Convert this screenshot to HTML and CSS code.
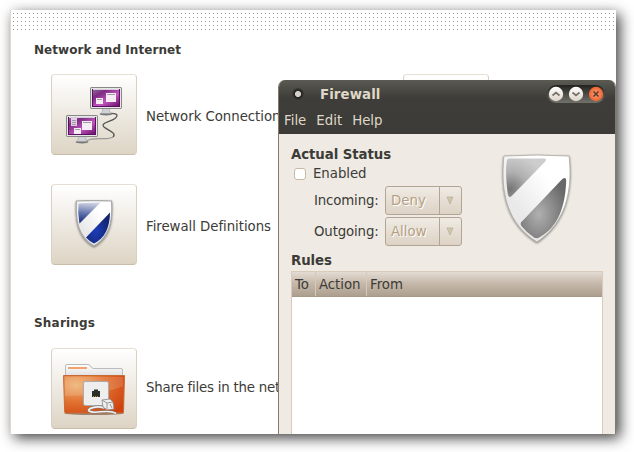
FILE: index.html
```html
<!DOCTYPE html>
<html lang="en">
<head>
<meta charset="utf-8">
<title>Firewall</title>
<link rel="stylesheet" href="styles.css">
</head>
<body>
<svg width="0" height="0" class="defs" aria-hidden="true">
  <defs>
    <linearGradient id="screen" x1="0" y1="0" x2="1" y2="1"><stop offset="0" stop-color="#8a6d92"/><stop offset=".25" stop-color="#7d2b83"/><stop offset=".6" stop-color="#c157bd"/><stop offset="1" stop-color="#6a0f6b"/></linearGradient>
    <linearGradient id="blueTop" x1=".3" y1="0" x2=".2" y2="1"><stop offset="0" stop-color="#cdd2e2"/><stop offset=".5" stop-color="#6476ad"/><stop offset="1" stop-color="#10277c"/></linearGradient>
    <radialGradient id="blueLow" cx=".4" cy=".6" r=".65"><stop offset="0" stop-color="#1d3cb8"/><stop offset="1" stop-color="#12246b"/></radialGradient>
    <radialGradient id="grayTop" cx=".1" cy=".8" r=".9"><stop offset="0" stop-color="#737373"/><stop offset=".5" stop-color="#b0b0b0"/><stop offset="1" stop-color="#cdcdcd"/></radialGradient>
    <radialGradient id="grayLow" cx=".4" cy=".6" r=".65"><stop offset="0" stop-color="#b0b0b0"/><stop offset="1" stop-color="#686868"/></radialGradient>
    <linearGradient id="plate" x1="1" y1="0" x2="0" y2="1"><stop offset=".3" stop-color="#fff"/><stop offset=".7" stop-color="#e9e9e9"/></linearGradient>
    <radialGradient id="folder" cx=".2" cy=".25" r=".95"><stop offset="0" stop-color="#eeb070"/><stop offset=".5" stop-color="#e0702f"/><stop offset="1" stop-color="#cf420f"/></radialGradient>
    <linearGradient id="paper" x1="0" y1="0" x2="0" y2="1"><stop offset="0" stop-color="#fff"/><stop offset="1" stop-color="#ddd"/></linearGradient>
    <g id="monitor">
      <ellipse cx="16" cy="27" rx="6.500" ry="1.500" fill="#777"/>
      <path d="M13 21h6l1 4 1 1.500H11l1-1.500z" fill="#cfd3d5" stroke="#999" stroke-width=".5"/>
      <rect x=".5" y=".5" width="31" height="21" rx=".6" fill="#e6e6e6" stroke="#888"/>
      <rect x="2" y="2" width="28" height="18" fill="#5c0e60"/>
      <rect x="3" y="3" width="26" height="16" fill="url(#screen)"/>
      <path d="M3 2.500h26" stroke="#d9cddd"/>
    </g>
  </defs>
</svg>

<main class="screen">
  <div class="dots"></div>
  <section class="group">
    <h2>Network and Internet</h2>
    <div class="grid">
      <div class="item">
        <div class="tile">
          <svg width="60" height="60" viewBox="64 85 60 60">
            <path d="M108 113.500C115 113 120 114 115 118.500C110 122 100 123 104 127C109 131 117 133 113 137" fill="none" stroke="#555" stroke-width="1.300"/>
            <path d="M113 137C107 141 96 136 86 141" fill="none" stroke="#999" stroke-width="1.300"/>
            <use href="#monitor" x="90" y="87"/>
            <use href="#monitor" x="66" y="115"/>
            <g fill="#f7ebf5"><path d="M106 93h10v9h-10zM96 98h7v6h-7zM82 121h10v9H82zM74 128h7v6h-7z"/><path d="M71 118h6v8h-6z" fill="#e6cce6"/></g>
            <path d="M107 94.500h8M97 99.500h5M83 122.500h8M75 129.500h5M72 120.500h4M72 122.500h4M72 124.500h4" stroke="#a09aa3"/>
          </svg>
        </div>
        <span>Network Connection</span>
      </div>
      <div class="item"><div class="tile"></div></div>
      <div class="item">
        <div class="tile">
          <svg class="shield small" width="38" height="48" viewBox="0 0 76 96">
            <path d="M3 2Q38 0 73 2C76 44 68 75 38 92C8 75 0 44 3 2z" fill="url(#plate)" stroke="#aaa" stroke-width="2.500"/>
            <path d="M7 7Q28 5 51 5L9 47Q5 26 7 7z" fill="url(#blueTop)"/>
            <path d="M70 25C70 54 60 77 38 87Q29 83 22 75z" fill="url(#blueLow)"/>
          </svg>
        </div>
        <span>Firewall Definitions</span>
      </div>
    </div>
  </section>
  <section class="group sharing">
    <h2>Sharings</h2>
    <div class="grid">
      <div class="item">
        <div class="tile">
          <svg width="66" height="56" viewBox="61 362 66 56">
            <ellipse cx="94" cy="414.500" rx="30" ry="1.500" fill="#9b8475"/>
            <path d="M65.500 378V367Q65.500 365.500 67 365.500H88Q90 365.500 91 368L93 369.500H121Q122.500 369.500 122.500 371V378z" fill="url(#paper)" stroke="#bbb"/>
            <path d="M68 369h19" stroke="#f2a36e" stroke-width="2"/>
            <path d="M63.500 376.500H124.500L123.500 413.500Q123.500 414 122 414H66Q64.800 414 64.700 413z" fill="url(#folder)" stroke="#c86a35"/>
            <path d="M65 378h58V387Q100 397 65 397z" fill="#fff" opacity=".14"/>
            <rect x="83.500" y="382.500" width="25" height="24" rx="2" fill="#eee" stroke="#aaa"/>
            <path d="M92 398V392h2v-1.500h4v1.500h2v6z" fill="#292e29"/><path d="M93 397.500h6" stroke="#b1913d" stroke-dasharray="1 1"/>
            <path d="M104 409C97 406 86 410 89 412C95 416 108 409 116 414.500" fill="none" stroke="#777" stroke-width="2.600"/>
            <path d="M104 409C97 406 86 410 89 412C95 416 108 409 116 414.500" fill="none" stroke="#f2f2f2" stroke-width="1.600"/>
            <path d="M102 401l8-1 3 3 1 7-7 1-4-3z" fill="#eee" stroke="#888" stroke-width=".8"/><path d="M102 401l5 3 6-1M107 404v7M110 405l2 4" fill="none" stroke="#999"/>
          </svg>
        </div>
        <span>Share files in the net</span>
      </div>
    </div>
  </section>

  <div class="window">
    <header>
      <div class="titlebar">
        <i class="orb"></i><b>Firewall</b>
        <div class="controls">
          <svg width="58" height="18" viewBox="0 0 58 18">
            <defs>
              <linearGradient id="pill" x1="0" y1="0" x2="0" y2="1"><stop offset="0" stop-color="#22221f"/><stop offset="1" stop-color="#72726b"/></linearGradient>
              <linearGradient id="knob" x1="0" y1="0" x2="0" y2="1"><stop offset="0" stop-color="#fff"/><stop offset="1" stop-color="#ddd4c8"/></linearGradient>
              <radialGradient id="close"><stop offset="0" stop-color="#ffa477"/><stop offset="1" stop-color="#ee6130"/></radialGradient>
            </defs>
            <rect width="58" height="18" rx="9" fill="url(#pill)"/>
            <circle cx="9" cy="9" r="7.200" fill="url(#knob)"/><circle cx="29" cy="9" r="7.200" fill="url(#knob)"/><circle cx="49" cy="9" r="7.200" fill="url(#close)"/>
            <path d="M5.500 10.500L9 7.500l3.500 3M25.500 7.500l3.500 3 3.500-3" fill="none" stroke="#777168" stroke-width="1.700"/>
            <path d="M46.500 6.500l5 5M51.500 6.500l-5 5" stroke="#5b3a2c" stroke-width="1.600"/>
          </svg>
        </div>
      </div>
      <nav><span>File</span><span>Edit</span><span>Help</span></nav>
    </header>
    <div class="content">
      <div class="status">
        <div class="form">
          <h3>Actual Status</h3>
          <label class="enabled"><i class="check"></i><span>Enabled</span></label>
          <div class="field"><span>Incoming:</span><div class="combo"><span>Deny</span><i><svg width="6" height="7"><path d="M0 0h6L3 7z"/></svg></i></div></div>
          <div class="field"><span>Outgoing:</span><div class="combo"><span>Allow</span><i><svg width="6" height="7"><path d="M0 0h6L3 7z"/></svg></i></div></div>
        </div>
        <svg class="shield" width="74" height="96" viewBox="0 0 76 96" preserveAspectRatio="none">
          <path d="M4 6Q38 4 71 6C75 42 67 73 38 92C8 74 0 44 4 6z" fill="url(#plate)" stroke="#b5b2ad"/>
          <path d="M9 8.500H45Q49 8.500 46 12L12 46Q9 49 8 44Q5 22 7 11Q7 8.500 9 8.500z" fill="url(#grayTop)"/>
          <path d="M64 29Q68 26 68 31C67 56 60 77 41 87Q37 90 33 86Q27 82 22 76Q20 73 23 71z" fill="url(#grayLow)"/>
        </svg>
      </div>
      <h3 class="rules">Rules</h3>
      <div class="table"><div class="thead"><span>To</span><span>Action</span><span>From</span></div></div>
    </div>
  </div>
</main>
</body>
</html>
```

FILE: styles.css
```css
* { box-sizing: border-box; }
body {
  margin: 0;
  width: 634px;
  height: 452px;
  overflow: hidden;
  background: #fff;
  padding: 10px;
  font: 13.33px/16px "DejaVu Sans", sans-serif;
  letter-spacing: -.05px;
  color: #3c3b37;
}
.defs { position: absolute; }
h2, h3 { margin: 0; font-weight: bold; }
h3 { font-size: 13.33px; letter-spacing: -.08px; }
i { display: block; }
svg { display: block; }
.screen {
  position: relative;
  width: 606px;
  height: 424px;
  background: #fff;
  border-left: 1px solid #e3d8ce;
  box-shadow: 4px 4px 13px rgba(0, 0, 0, .75);
}
.dots {
  height: 22px;
  background: radial-gradient(circle at 2.5px 3.5px, #999 0, #999 .7px, transparent .8px) 0 0 / 4px 4px;
}
.group { padding: 10px 0 0 23px; }
.group h2 { font-size: 12px; line-height: 16px; letter-spacing: .05px; }
.grid {
  display: grid;
  grid-template-columns: 352px 200px;
  row-gap: 29px;
  padding: 16px 0 0 17px;
  width: 570px;
}
.item { display: flex; align-items: center; gap: 9px; white-space: nowrap; }
.item span { padding-top: 5px; }
.tile {
  width: 86px;
  height: 81px;
  display: flex;
  align-items: center;
  justify-content: center;
  border: 1px solid #d9cfc0;
  border-color: #e7dfd3 #d9cfc0 #c9bda9;
  border-radius: 4px;
  background: linear-gradient(#fff, #ddd4c4);
}
.sharing { padding-top: 50px; }
.sharing h2 { letter-spacing: .2px; }
.sharing .grid { padding-top: 17px; }
.sharing .item span { padding: 0 0 1px; letter-spacing: -.2px; }
.shield { filter: drop-shadow(0 1px 1px rgba(0, 0, 0, .45)); }
.small { margin-bottom: 1px; }
.window {
  position: absolute;
  left: 267px;
  top: 70px;
  width: 338px;
  height: 354px;
  border: 1px solid #85796a;
  border-width: 0 1px;
  border-radius: 7px 7px 0 0;
  background: #efebe4;
  overflow: hidden;
}
header {
  height: 54px;
  background: linear-gradient(#5a5a53, #3e3d39 18px, #3c3b37);
  color: #dfd8c8;
}
.titlebar {
  height: 28px;
  display: flex;
  align-items: center;
  padding: 0 10px 0 13px;
}
.titlebar b { margin-left: 16px; padding-top: 2px; letter-spacing: .1px; }
.controls { margin-left: auto; }
.orb {
  width: 12px;
  height: 12px;
  border-radius: 50%;
  background: radial-gradient(circle, #d5d0c8 0 2.6px, #252421 3.5px, #32312e 5px, #555);
}
nav { display: flex; gap: 10px; padding: 5px 5px; letter-spacing: 0; }
.content { padding: 13px 12px 0; }
.status { display: flex; justify-content: space-between; height: 106px; }
.status > .shield { margin: 3px 29px 0 0; }
.enabled { display: flex; align-items: center; gap: 7px; height: 23px; margin-top: -1px; padding-left: 3px; }
.enabled span { padding-top: 1px; }
.check { width: 12px; height: 12px; border: 1px solid #c6b9a8; border-radius: 3px; background: #fff; }
.field { display: flex; align-items: center; height: 29px; margin-top: 1px; padding-left: 23px; letter-spacing: -.15px; }
.field + .field { margin-top: 2px; }
.field > span { width: 71px; }
.combo {
  display: flex;
  align-items: center;
  width: 77px;
  height: 29px;
  border: 1px solid #b3a594;
  border-radius: 3px;
  background: linear-gradient(#efebe4, #ddd2c5);
  color: #b5a082;
  text-shadow: 1px 1px #fff;
  letter-spacing: 0;
}
.combo > span { width: 53px; padding-left: 5px; }
.combo i { height: 27px; flex: 1; display: flex; align-items: center; justify-content: center; border-left: 1px solid #b3a594; }
.combo svg { margin-right: 2px; fill: #d0c7ab; stroke: #b3a594; stroke-width: .6; overflow: visible; }
.table { height: 163px; border: 1px solid #d8cbb9; border-bottom: 0; background: #fff; }
.thead {
  display: flex;
  height: 25px;
  background: linear-gradient(#e3dcd3, #c7baac 45%, #ad9f8e);
  border-bottom: 1px solid #a79987;
}
.thead span { padding: 5px 4px 0 3px; border-right: 1px solid #d6cabb; }
.thead span:nth-child(1) { width: 24px; }
.thead span:nth-child(2) { width: 51px; }
.thead span:nth-child(3) { border: 0; }
.rules { height: 18px; }
```
